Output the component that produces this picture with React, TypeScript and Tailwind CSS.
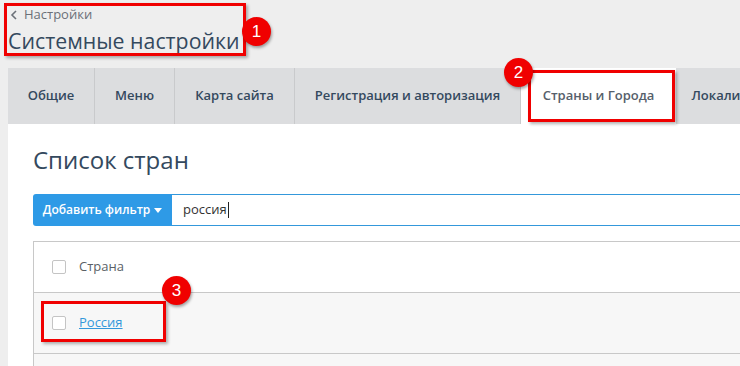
import React from "react";

const tabs = [
  { label: "Общие", w: "w-[87px]" },
  { label: "Меню", w: "w-[80px]" },
  { label: "Карта сайта", w: "w-[120px]" },
  { label: "Регистрация и авторизация", w: "w-[226px]" },
  { label: "Страны и Города", w: "w-[155px]", active: true },
  { label: "Локализация", w: "w-[120px]" },
];

function Badge({ n, className }: { n: string; className: string }) {
  return (
    <div
      className={
        "absolute w-[29px] h-[29px] rounded-full bg-[#f00000] text-white flex items-center justify-center text-[17px] leading-none shadow-[1px_2px_3px_rgba(0,0,0,0.35)] " +
        className
      }
      style={{ fontFamily: "'Liberation Sans', Arial, sans-serif" }}
    >
      {n}
    </div>
  );
}

function Checkbox() {
  return <div className="w-[14px] h-[14px] rounded-[2px] border border-[#c4c4c4] bg-white shrink-0" />;
}

export default function App() {
  return (
    <div
      className="relative w-[740px] h-[366px] overflow-hidden bg-[#eeeeee]"
      style={{ fontFamily: "'Open Sans', 'Noto Sans', sans-serif" }}
    >
      {/* header */}
      <div className="pl-[8px]">
        <div className="h-[29px] flex items-center gap-[6px] text-[13px] text-[#6b7078]">
          <svg width="8" height="10" viewBox="0 0 8 10" className="ml-[2px]">
            <path d="M6 1 L2 5 L6 9" fill="none" stroke="#6b7078" strokeWidth="1.6" />
          </svg>
          <span>Настройки</span>
        </div>
        <div className="h-[24px] leading-[24px] text-[21.3px] text-[#34495e]">Системные настройки</div>
      </div>

      {/* tabs */}
      <div className="mt-[15px] ml-[8px] flex h-[56px] bg-[#dcdddf]">
        {tabs.map((t, i) => (
          <div
            key={i}
            className={
              "shrink-0 flex items-center justify-center text-[13px] font-semibold whitespace-nowrap " +
              t.w +
              (t.active
                ? " bg-white text-[#56606b]"
                : " text-[#34495e] border-r border-[#c9cacc]")
            }
          >
            {t.label}
          </div>
        ))}
      </div>

      {/* content */}
      <div className="ml-[8px] bg-white pl-[25px] h-[300px]">
        <div className="pt-[18px] h-[54px] leading-[36px] text-[24px] text-[#34495e]">Список стран</div>
        <div className="mt-[16px] flex h-[32px]">
          <div className="w-[139px] shrink-0 bg-[#2e9ae6] rounded-l-[3px] flex items-center justify-center gap-[4px] text-white text-[12px] font-semibold">
            <span>Добавить фильтр</span>
            <svg width="8" height="5" viewBox="0 0 8 5">
              <path d="M0 0 L8 0 L4 5 Z" fill="white" />
            </svg>
          </div>
          <div className="flex-1 border-y border-[#3498db] flex items-center pl-[11px] text-[13px] text-[#333]">
            <span>россия</span>
            <span className="w-px h-[16px] bg-[#222] ml-[1px]" />
          </div>
        </div>
        <div className="mt-[15px] border-t border-l border-[#c8c8c8]">
          <div className="h-[51px] flex items-center gap-[13px] pl-[18px] border-b border-[#c8c8c8] text-[13px] text-[#5a5f66]">
            <Checkbox />
            <span>Страна</span>
          </div>
          <div className="h-[61px] flex items-center gap-[13px] pl-[18px] bg-[#f7f7f7] border-b border-[#c8c8c8] text-[13px]">
            <Checkbox />
            <span className="text-[#3498db] underline">Россия</span>
          </div>
          <div className="h-[40px] bg-[#f7f7f7]" />
        </div>
      </div>

      {/* annotations */}
      <div className="absolute left-[4px] top-[3px] w-[242px] h-[53px] border-[3px] border-[#f00000] shadow-[2px_2px_3px_rgba(0,0,0,0.3)]" />
      <Badge n="1" className="left-[242px] top-[17px]" />
      <div className="absolute left-[528px] top-[70px] w-[147px] h-[52px] border-[3px] border-[#f00000] shadow-[2px_2px_3px_rgba(0,0,0,0.3)]" />
      <Badge n="2" className="left-[504px] top-[58px]" />
      <div className="absolute left-[41px] top-[301px] w-[125px] h-[41px] border-[3px] border-[#f00000] shadow-[2px_2px_3px_rgba(0,0,0,0.3)]" />
      <Badge n="3" className="left-[162px] top-[276px]" />
    </div>
  );
}
